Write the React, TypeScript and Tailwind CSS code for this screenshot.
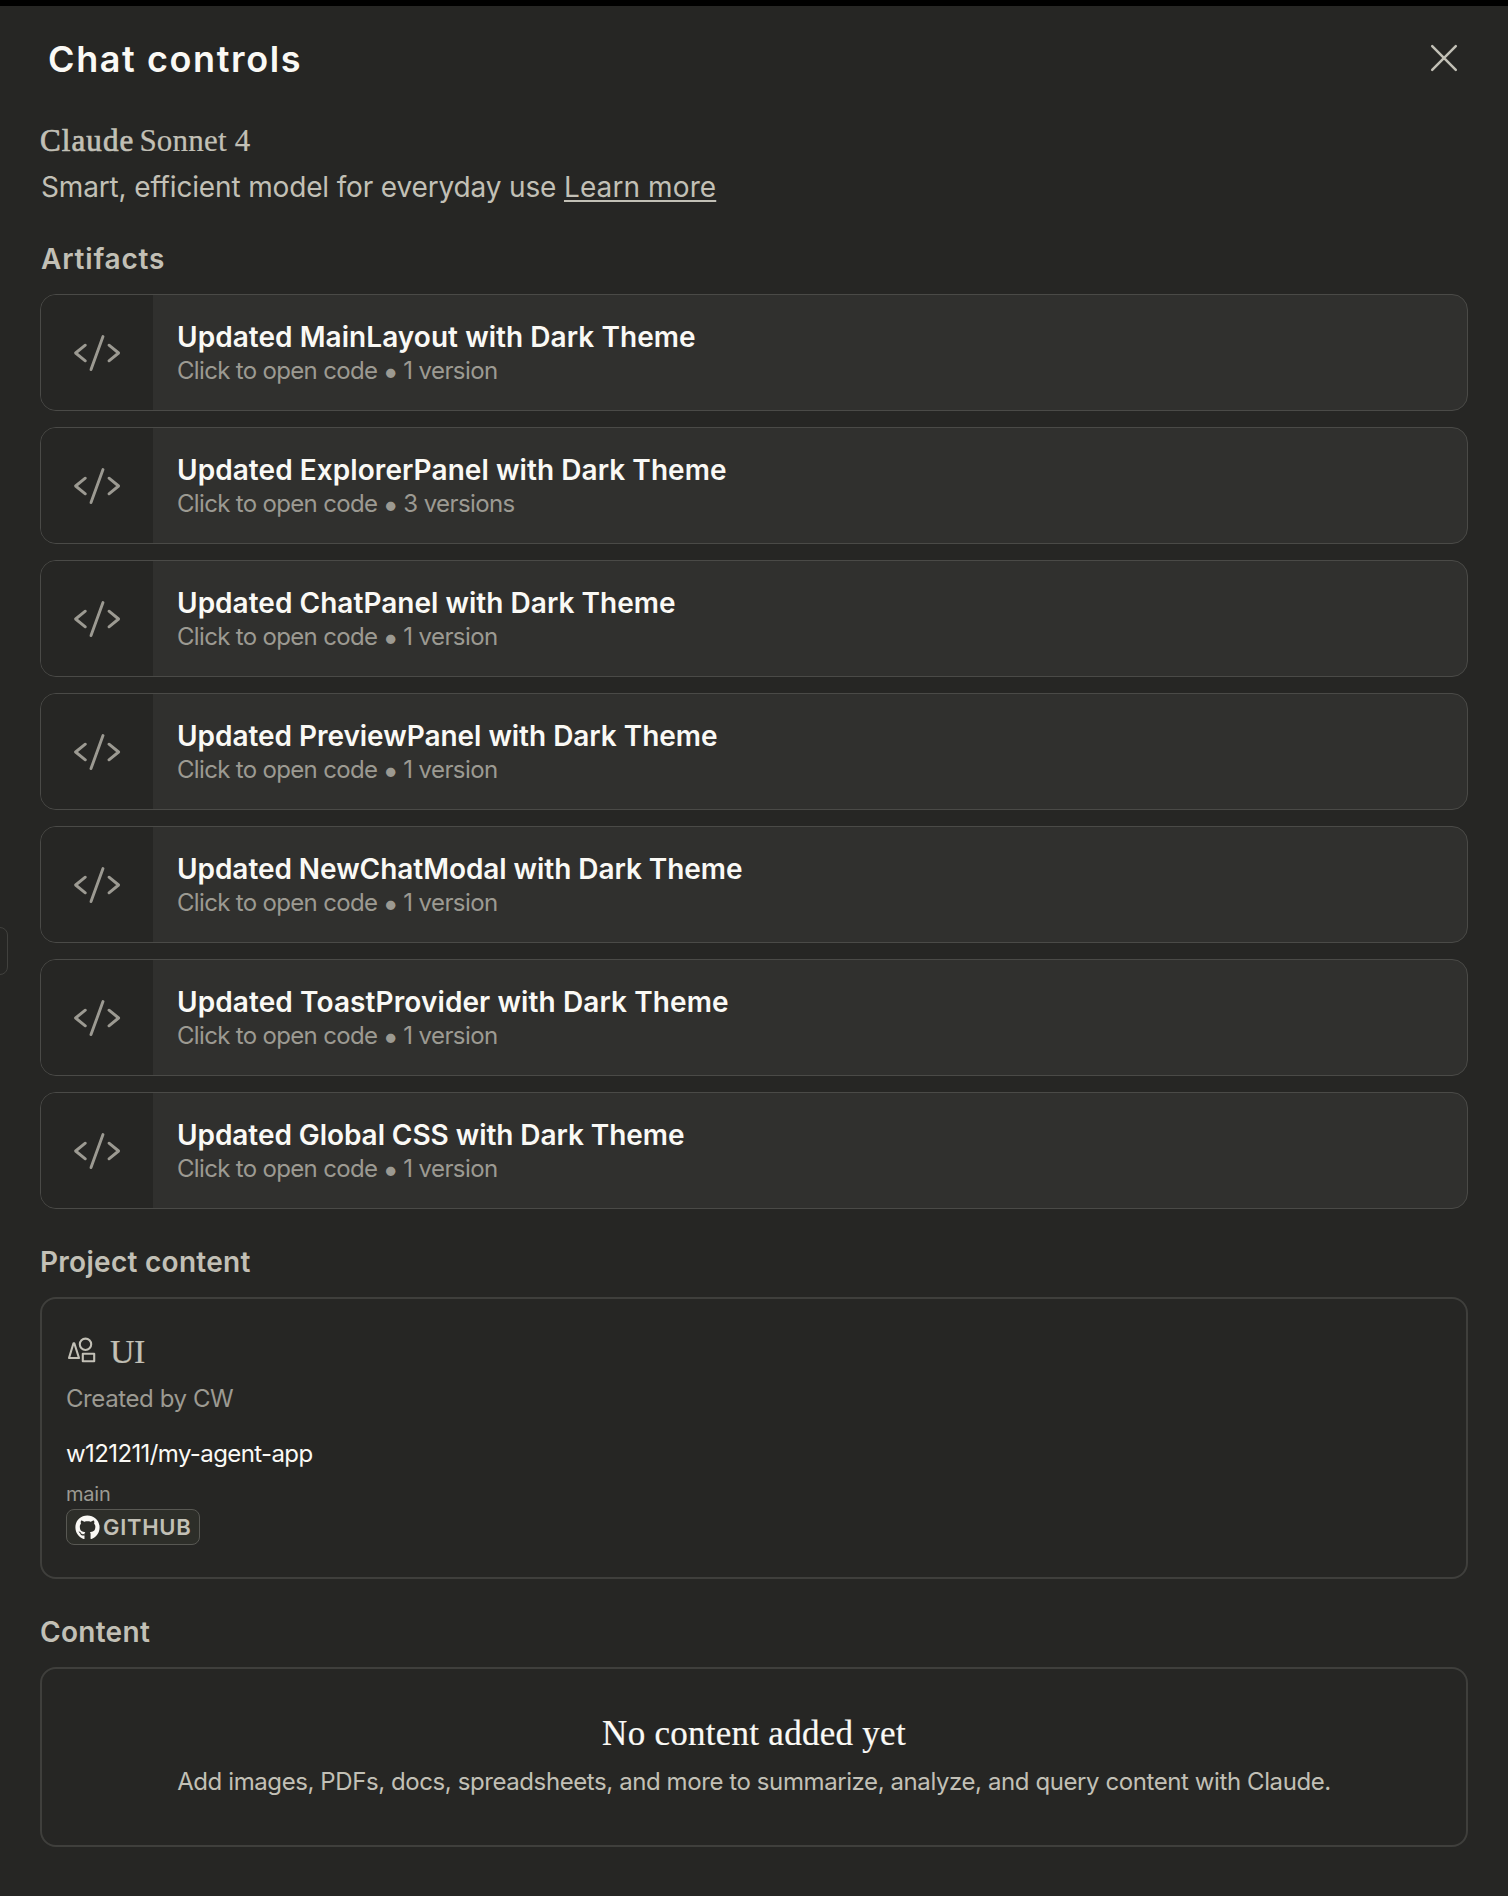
import type { ReactNode } from "react";
import { FaGithub } from "react-icons/fa";

type Artifact = { title: string; versions: string; tracking: string };

const artifacts: Artifact[] = [
  { title: "Updated MainLayout with Dark Theme", versions: "1 version", tracking: "tracking-[0.048px]" },
  { title: "Updated ExplorerPanel with Dark Theme", versions: "3 versions", tracking: "tracking-[0.06px]" },
  { title: "Updated ChatPanel with Dark Theme", versions: "1 version", tracking: "tracking-[0.022px]" },
  { title: "Updated PreviewPanel with Dark Theme", versions: "1 version", tracking: "tracking-[-0.043px]" },
  { title: "Updated NewChatModal with Dark Theme", versions: "1 version", tracking: "tracking-[-0.058px]" },
  { title: "Updated ToastProvider with Dark Theme", versions: "1 version", tracking: "tracking-[0.094px]" },
  { title: "Updated Global CSS with Dark Theme", versions: "1 version", tracking: "tracking-[-0.067px]" },
];

function CloseIcon() {
  return (
    <svg width="28" height="28" viewBox="0 0 28 28" fill="none" stroke="currentColor" strokeWidth="2.5" strokeLinecap="round">
      <path d="M2.2 2.2 25.8 25.8M25.8 2.2 2.2 25.8" />
    </svg>
  );
}

function CodeIcon() {
  return (
    <svg width="50" height="50" viewBox="0 0 50 50" fill="none" stroke="currentColor" strokeWidth="2.9" strokeLinecap="round" strokeLinejoin="round">
      <path d="M13.3 17.2 3.6 25 13.3 32.8M31 8.6 19 41.6M37 17.2 46.6 25 37 32.8" />
    </svg>
  );
}

function ShapesIcon() {
  return (
    <svg width="32" height="28" viewBox="0 0 32 28" fill="none" stroke="currentColor" strokeWidth="2.1" strokeLinejoin="round">
      <path d="M7.5 7.2h.8L13 22H3Z" />
      <circle cx="19.5" cy="8.3" r="5.7" />
      <path d="M16.8 17.8h11.4v7.4H16.8Z" />
    </svg>
  );
}

function SectionTitle({ children, className }: { children: ReactNode; className: string }) {
  return <h2 className={`text-[28px] leading-10 font-semibold text-[#c2c0b6] ${className}`}>{children}</h2>;
}

function ArtifactCard({ title, versions, tracking }: Artifact) {
  return (
    <li className="flex h-[117px] overflow-hidden rounded-2xl border border-[#4a4a47] bg-[#30302e]">
      <div className="flex w-28 items-center justify-center bg-[#262624] text-[#9c9a92]">
        <CodeIcon />
      </div>
      <div className="pt-6 pl-6">
        <div className={`text-[28px] leading-9 font-semibold text-[#faf9f5] ${tracking}`}>{title}</div>
        <div className="mt-px flex text-2xl leading-[30px] text-[#9c9a92]">
          <span className="tracking-[-0.67px]">Click to open code</span>
          <span className="w-[26px] pl-px text-center text-[30px]">•</span>
          <span className="tracking-[-0.6px]">{versions}</span>
        </div>
      </div>
    </li>
  );
}

export default function App() {
  return (
    <div className="relative h-[1896px] w-[1508px] overflow-hidden border-t-[6px] border-black bg-[#262624] px-10 font-[Inter,sans-serif] whitespace-nowrap">
      <div className="absolute top-[921px] -left-4 h-12 w-6 rounded-lg border border-[#41413e]" />

      <header className="flex items-start justify-between pt-[31px] pr-[10px] pl-2">
        <h1 className="text-4xl leading-[44px] font-semibold tracking-[1.6px] text-[#faf9f5]">Chat controls</h1>
        <button className="mt-[7px] text-[#c2c0b6]" aria-label="Close">
          <CloseIcon />
        </button>
      </header>

      <section className="mt-[42px] text-[#c2c0b6]">
        <div className="flex h-9 gap-[5px] font-['Liberation_Serif',serif] text-[31px] leading-9">
          <span className="tracking-[1.1px] [-webkit-text-stroke:0.7px_#c2c0b6]">Claude</span>
          <span className="tracking-[0.2px] [-webkit-text-stroke:0.2px_#c2c0b6]">Sonnet 4</span>
        </div>
        <p className="mt-2 pl-px text-[28px] leading-10">
          <span className="tracking-[-0.15px]">Smart, efficient model for everyday use </span>
          <a className="tracking-[0.1px] underline decoration-2 underline-offset-[3px]">Learn more</a>
        </p>
      </section>

      <section>
        <SectionTitle className="mt-8 pl-px tracking-[0.8px]">Artifacts</SectionTitle>
        <ul className="mt-[15px] flex flex-col gap-4">
          {artifacts.map((a) => (
            <ArtifactCard key={a.title} {...a} />
          ))}
        </ul>
      </section>

      <section>
        <SectionTitle className="mt-[33px] tracking-[0.28px]">Project content</SectionTitle>
        <div className="mt-[15px] flex h-[282px] flex-col items-start rounded-2xl border-2 border-[#3f3f3c] pt-[33px] pl-6">
          <div className="flex h-10 items-start text-[#c2c0b6]">
            <div className="mt-1">
              <ShapesIcon />
            </div>
            <span className="ml-[12px] font-['Liberation_Serif',serif] text-[34px] leading-10 tracking-[-0.5px] [-webkit-text-stroke:0.2px_#c2c0b6]">UI</span>
          </div>
          <div className="mt-[11px] text-2xl leading-8 tracking-[-0.41px] text-[#9c9a92]">Created by CW</div>
          <div className="mt-[23px] text-2xl leading-8 tracking-[-0.6px] text-[#faf9f5]">w121211/my-agent-app</div>
          <div className="mt-[12px] text-xl leading-6 tracking-[-0.2px] text-[#9c9a92]">main</div>
          <div className="mt-[3px] flex h-9 w-[134px] items-center gap-[3px] rounded-lg border border-[#585853] bg-[#2d2e29] pl-2">
            <FaGithub className="size-[25px] text-[#faf9f5]" />
            <span className="text-[22px] leading-none font-semibold tracking-[0.7px] text-[#c2c0b6]">GITHUB</span>
          </div>
        </div>
      </section>

      <section>
        <SectionTitle className="mt-[33px] tracking-[0.3px]">Content</SectionTitle>
        <div className="mt-[15px] flex h-[180px] flex-col items-center rounded-2xl border-2 border-[#3f3f3c] pt-[45px]">
          <div className="font-['Liberation_Serif',serif] text-[35px] leading-10 tracking-[0.27px] text-[#faf9f5] [-webkit-text-stroke:0.2px_#faf9f5]">No content added yet</div>
          <p className="mt-3 text-2xl leading-8 tracking-[-0.41px] text-[#c2c0b6]">
            Add images, PDFs, docs, spreadsheets, and more to summarize, analyze, and query content with Claude.
          </p>
        </div>
      </section>
    </div>
  );
}
